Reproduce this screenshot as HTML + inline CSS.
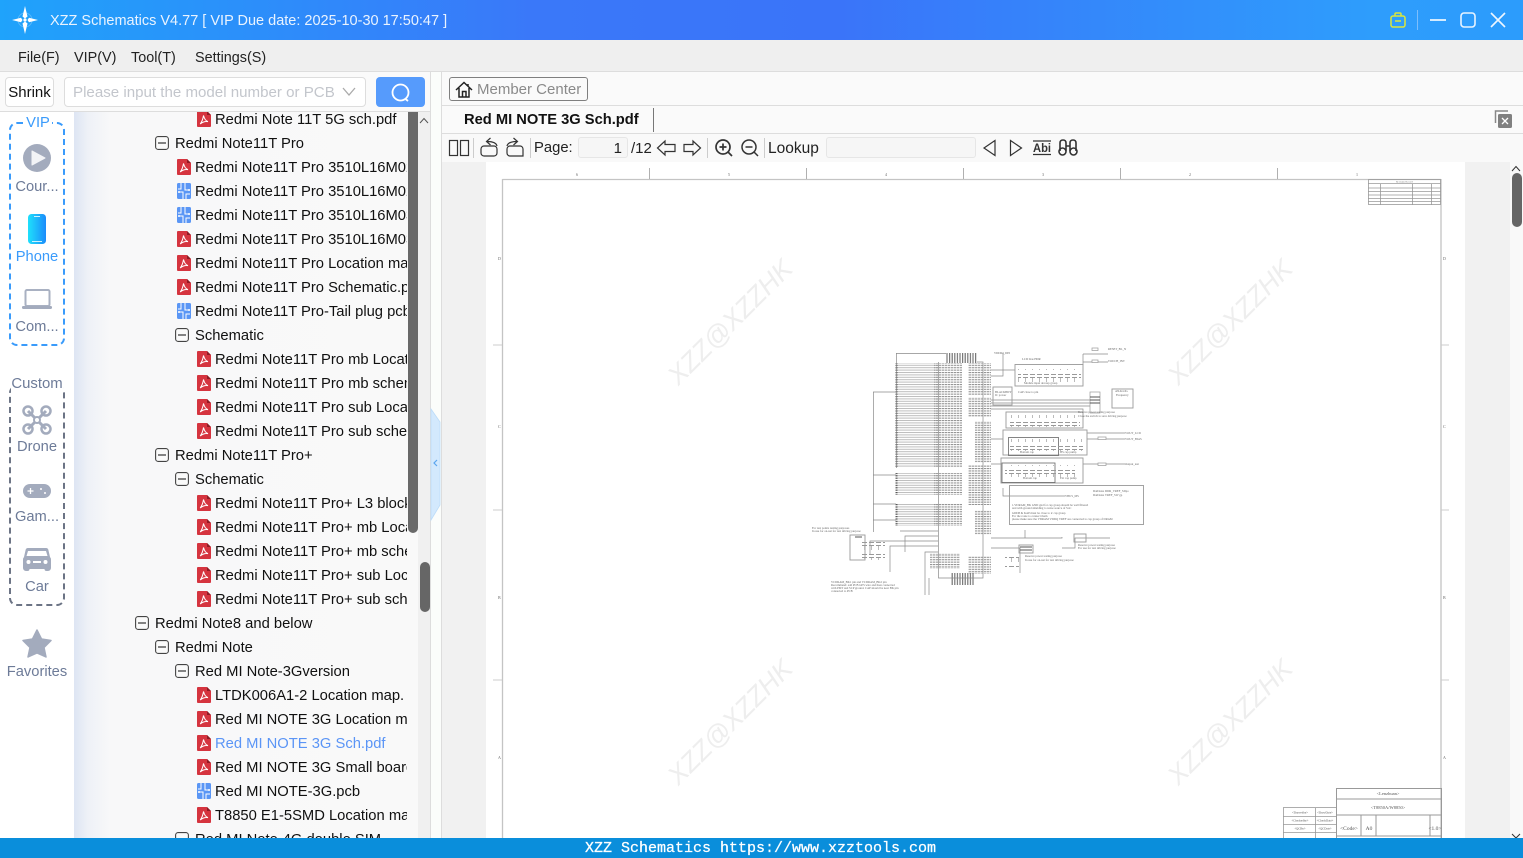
<!DOCTYPE html>
<html><head><meta charset="utf-8"><title>XZZ Schematics</title>
<style>
*{box-sizing:border-box}
html,body{margin:0;padding:0;width:1523px;height:858px;overflow:hidden;background:#fafafa;font-family:"Liberation Sans","Noto Sans CJK SC",sans-serif;font-size:15px;color:#222}
.a{position:absolute;white-space:nowrap}
#title{left:0;top:0;width:1523px;height:40px;background:linear-gradient(90deg,#1fa3fb 0,#3a78f9 35%,#3a74f9 55%,#2e9dfc 90%,#2c9cfc 100%)}
#menu{left:0;top:40px;width:1523px;height:32px;background:#efefef;border-bottom:1px solid #ddd}
.m{top:49px;line-height:18px;font-size:14.400px;color:#222}
#tree{left:74px;top:112px;width:333px;height:726px;overflow:hidden;background:linear-gradient(90deg,#dde5f3 0,#eef1f7 14px,#f8f8f9 36px,#f9f9f9 100%)}
.r{position:absolute;height:24px;line-height:24px;left:0;width:333px;white-space:nowrap;color:#111;font-size:14.760px}
.r svg{position:absolute;top:4px;width:14px;height:16px}
.r span{position:absolute;top:1px}
.lab{position:absolute;left:0;width:74px;text-align:center;font-size:14.700px;line-height:18px;color:#6d7b98}
.wm{position:absolute;white-space:nowrap;width:232px;text-align:center;line-height:36px;font-size:26.500px;font-style:italic;color:#eeeeee;transform:rotate(-45deg)}
</style></head><body>
<svg width="0" height="0" style="position:absolute"><defs>
<symbol id="pdf" viewBox="0 0 14 16"><path d="M1 0H10L14 4V15a1 1 0 0 1-1 1H1a1 1 0 0 1-1-1V1a1 1 0 0 1 1-1Z" fill="#d5343f"/><path d="M10 0L14 4H10Z" fill="#8e1c25"/><path d="M6.5 4.5C7.5 8 8.5 9.6 11 10.6 8 10.2 5.5 11 3.2 13 5 10.600 6 8 6.500 4.500Z" fill="none" stroke="#fff" stroke-width="1"/></symbol>
<symbol id="pcb" viewBox="0 0 14 16"><rect width="14" height="16" rx="1.500" fill="#5a96f5"/><path d="M4 0V6H1M6 16V9H2M8 0V7H13M9 16V11H13" fill="none" stroke="#fff" stroke-width="1"/><circle cx="2" cy="9" r="1" fill="#fff"/><circle cx="12" cy="7" r="1" fill="#fff"/></symbol>
<symbol id="box" viewBox="0 0 14 14"><rect x=".6" y=".6" width="12.800" height="12.800" rx="2.500" fill="#fafafa" stroke="#444" stroke-width="1.100"/><path d="M3 7H11" stroke="#333" stroke-width="1.200"/></symbol>
<pattern id="h1" width="4" height="2.400" patternUnits="userSpaceOnUse"><rect width="4" height="1" fill="#bdbdbd"/></pattern>
<pattern id="h2" width="3" height="2.400" patternUnits="userSpaceOnUse"><rect width="2.400" height="1.100" fill="#949494"/></pattern>
<pattern id="d1" width="2" height="2.400" patternUnits="userSpaceOnUse"><rect width="2" height="1.200" fill="#555"/></pattern>
<pattern id="v1" width="2.600" height="4" patternUnits="userSpaceOnUse"><rect width="1.200" height="4" fill="#777"/></pattern>
<pattern id="c1" width="7" height="12" patternUnits="userSpaceOnUse"><rect x="1" y="2" width="5" height="1" fill="#999"/><rect x="1" y="5" width="5" height="1" fill="#999"/><rect x="3" y="6" width="1" height="4" fill="#bbb"/></pattern>
</defs></svg>

<div id="title" class="a"></div>
<div class="a" style="left:50px;top:12px;line-height:19px;color:#e9f3ff;font-size:14.500px">XZZ Schematics V4.77 [ VIP Due date: 2025-10-30 17:50:47 ]</div>
<div id="menu" class="a"></div>
<div class="a m" style="left:18px">File(F)</div><div class="a m" style="left:74px">VIP(V)</div><div class="a m" style="left:131px">Tool(T)</div><div class="a m" style="left:195px">Settings(S)</div>

<div class="a" style="left:5px;top:77px;width:49px;height:30px;border:1px solid #ddd;border-radius:4px;background:#fff;text-align:center;line-height:30px;font-size:15px;color:#111">Shrink</div>
<div class="a" style="left:64px;top:77px;width:302px;height:30px;border:1px solid #ddd;border-radius:4px;background:#fff;line-height:30px;padding-left:8px;color:#c3c6cc;font-size:15.100px">Please input the model number or PCB</div>
<div class="a" style="left:376px;top:77px;width:49px;height:30px;background:#569bfc;border-radius:4px"></div>
<div class="a" style="left:0;top:111px;width:431px;height:1px;background:#ddd"></div>
<div class="a" style="left:0;top:112px;width:74px;height:726px;background:#fff"></div>

<div id="tree" class="a">
<div class="r" style="top:-5px"><svg style="left:123px"><use href="#pdf"/></svg><span style="left:141px">Redmi Note 11T 5G sch.pdf</span></div>
<div class="r" style="top:19px"><svg style="left:81px;top:4px"><use href="#box"/></svg><span style="left:101px">Redmi Note11T Pro</span></div>
<div class="r" style="top:43px"><svg style="left:103px"><use href="#pdf"/></svg><span style="left:121px">Redmi Note11T Pro 3510L16M02 mb sch.pdf</span></div>
<div class="r" style="top:67px"><svg style="left:103px"><use href="#pcb"/></svg><span style="left:121px">Redmi Note11T Pro 3510L16M02 mb.pcb</span></div>
<div class="r" style="top:91px"><svg style="left:103px"><use href="#pcb"/></svg><span style="left:121px">Redmi Note11T Pro 3510L16M03 mb.pcb</span></div>
<div class="r" style="top:115px"><svg style="left:103px"><use href="#pdf"/></svg><span style="left:121px">Redmi Note11T Pro 3510L16M03 mb sch.pdf</span></div>
<div class="r" style="top:139px"><svg style="left:103px"><use href="#pdf"/></svg><span style="left:121px">Redmi Note11T Pro Location map.pdf</span></div>
<div class="r" style="top:163px"><svg style="left:103px"><use href="#pdf"/></svg><span style="left:121px">Redmi Note11T Pro Schematic.pdf</span></div>
<div class="r" style="top:187px"><svg style="left:103px"><use href="#pcb"/></svg><span style="left:121px">Redmi Note11T Pro-Tail plug pcb.pcb</span></div>
<div class="r" style="top:211px"><svg style="left:101px;top:4px"><use href="#box"/></svg><span style="left:121px">Schematic</span></div>
<div class="r" style="top:235px"><svg style="left:123px"><use href="#pdf"/></svg><span style="left:141px">Redmi Note11T Pro mb Location.pdf</span></div>
<div class="r" style="top:259px"><svg style="left:123px"><use href="#pdf"/></svg><span style="left:141px">Redmi Note11T Pro mb schematic.pdf</span></div>
<div class="r" style="top:283px"><svg style="left:123px"><use href="#pdf"/></svg><span style="left:141px">Redmi Note11T Pro sub Location.pdf</span></div>
<div class="r" style="top:307px"><svg style="left:123px"><use href="#pdf"/></svg><span style="left:141px">Redmi Note11T Pro sub schematic.pdf</span></div>
<div class="r" style="top:331px"><svg style="left:81px;top:4px"><use href="#box"/></svg><span style="left:101px">Redmi Note11T Pro+</span></div>
<div class="r" style="top:355px"><svg style="left:101px;top:4px"><use href="#box"/></svg><span style="left:121px">Schematic</span></div>
<div class="r" style="top:379px"><svg style="left:123px"><use href="#pdf"/></svg><span style="left:141px">Redmi Note11T Pro+ L3 block.pdf</span></div>
<div class="r" style="top:403px"><svg style="left:123px"><use href="#pdf"/></svg><span style="left:141px">Redmi Note11T Pro+ mb Location.pdf</span></div>
<div class="r" style="top:427px"><svg style="left:123px"><use href="#pdf"/></svg><span style="left:141px">Redmi Note11T Pro+ mb schematic.pdf</span></div>
<div class="r" style="top:451px"><svg style="left:123px"><use href="#pdf"/></svg><span style="left:141px">Redmi Note11T Pro+ sub Location.pdf</span></div>
<div class="r" style="top:475px"><svg style="left:123px"><use href="#pdf"/></svg><span style="left:141px">Redmi Note11T Pro+ sub schematic.pdf</span></div>
<div class="r" style="top:499px"><svg style="left:61px;top:4px"><use href="#box"/></svg><span style="left:81px">Redmi Note8 and below</span></div>
<div class="r" style="top:523px"><svg style="left:81px;top:4px"><use href="#box"/></svg><span style="left:101px">Redmi Note</span></div>
<div class="r" style="top:547px"><svg style="left:101px;top:4px"><use href="#box"/></svg><span style="left:121px">Red MI Note-3Gversion</span></div>
<div class="r" style="top:571px"><svg style="left:123px"><use href="#pdf"/></svg><span style="left:141px">LTDK006A1-2 Location map.</span></div>
<div class="r" style="top:595px"><svg style="left:123px"><use href="#pdf"/></svg><span style="left:141px">Red MI NOTE 3G Location map.pdf</span></div>
<div class="r" style="top:619px"><svg style="left:123px"><use href="#pdf"/></svg><span style="left:141px;color:#5b95f6">Red MI NOTE 3G Sch.pdf</span></div>
<div class="r" style="top:643px"><svg style="left:123px"><use href="#pdf"/></svg><span style="left:141px">Red MI NOTE 3G Small board.pdf</span></div>
<div class="r" style="top:667px"><svg style="left:123px"><use href="#pcb"/></svg><span style="left:141px">Red MI NOTE-3G.pcb</span></div>
<div class="r" style="top:691px"><svg style="left:123px"><use href="#pdf"/></svg><span style="left:141px">T8850 E1-5SMD Location map.pdf</span></div>
<div class="r" style="top:715px"><svg style="left:101px;top:4px"><use href="#box"/></svg><span style="left:121px">Red MI Note-4G double SIM</span></div>
</div>
<div class="a" style="left:407px;top:112px;width:11px;height:726px;background:#f9f9f9"></div>
<div class="a" style="left:408px;top:112px;width:10px;height:421px;background:#696969;border-radius:0 0 5px 5px"></div>
<div class="a" style="left:418px;top:112px;width:12px;height:726px;background:#f0f0f0"></div>
<div class="a" style="left:420px;top:562px;width:10px;height:50px;background:#666;border-radius:5px"></div>
<div class="a" style="left:430px;top:72px;width:1px;height:766px;background:#ddd"></div>
<div class="a" style="left:431px;top:72px;width:10px;height:766px;background:#fbfdfb"></div>
<div class="a" style="left:441px;top:72px;width:1px;height:766px;background:#ddd"></div>

<div class="a" style="left:442px;top:72px;width:1081px;height:33px;background:#fafafa"></div>
<div class="a" style="left:442px;top:105px;width:1081px;height:1px;background:#ddd"></div>
<div class="a" style="left:442px;top:133px;width:1081px;height:1px;background:#ddd"></div>
<div class="a" style="left:442px;top:134px;width:1081px;height:28px;background:#f9f9f9"></div>
<div class="a" style="left:449px;top:77px;width:139px;height:24px;border:1px solid #7f7f7f;border-radius:3px"></div>
<div class="a" style="left:477px;top:80px;line-height:19px;font-size:15px;color:#8a8a8a">Member Center</div>
<div class="a" style="left:464px;top:111px;line-height:19px;font-weight:bold;color:#111;font-size:14.700px">Red MI NOTE 3G Sch.pdf</div>
<div class="a" style="left:653px;top:108px;width:1px;height:24px;background:#777"></div>
<div class="a" style="left:534px;top:139px;line-height:19px;color:#222;font-size:14.800px">Page:</div>
<div class="a" style="left:578px;top:137px;width:50px;height:21px;background:#f6f6f6;border:1px solid #e6e6e6;border-radius:3px;text-align:right;padding-right:5px;line-height:21px;color:#222">1</div>
<div class="a" style="left:631px;top:139px;line-height:19px;color:#222">/12</div>
<div class="a" style="left:768px;top:139px;line-height:19px;color:#222;font-size:15.500px">Lookup</div>
<div class="a" style="left:826px;top:137px;width:150px;height:21px;background:#f6f6f6;border:1px solid #e6e6e6;border-radius:3px"></div>

<div class="a" style="left:442px;top:162px;width:1068px;height:676px;background:#f1f1f1"></div>
<div class="a" style="left:486px;top:162px;width:979px;height:676px;background:#fff"></div>
<div class="a" style="left:1510px;top:162px;width:13px;height:676px;background:#f9f9f9"></div>
<div class="a" style="left:1512px;top:173px;width:10px;height:54px;background:#666;border-radius:5px"></div>

<div class="wm" style="left:614px;top:304px">XZZ@XZZHK</div>
<div class="wm" style="left:1114px;top:304px">XZZ@XZZHK</div>
<div class="wm" style="left:614px;top:704px">XZZ@XZZHK</div>
<div class="wm" style="left:1114px;top:704px">XZZ@XZZHK</div>

<!-- sidebar labels -->
<div class="a" style="left:9px;top:122px;width:56px;height:224px;border:2px dashed #3a9bfb;border-radius:8px"></div>
<div class="a" style="left:9px;top:385px;width:56px;height:221px;border:2px dashed #6c7485;border-radius:8px"></div>
<div class="a" style="left:24px;top:114px;width:28px;height:18px;background:#fff;text-align:center;line-height:18px;font-size:14.700px;color:#3a9bfb">VIP</div>
<div class="a" style="left:11px;top:375px;width:52px;height:18px;background:#fff;text-align:center;line-height:18px;font-size:14.900px;color:#6d7b98">Custom</div>
<div class="lab" style="top:178px">Cour...</div>
<div class="lab" style="top:248px;color:#3a9bfb">Phone</div>
<div class="lab" style="top:318px">Com...</div>
<div class="lab" style="top:438px">Drone</div>
<div class="lab" style="top:508px">Gam...</div>
<div class="lab" style="top:578px">Car</div>
<div class="lab" style="top:663px">Favorites</div>

<svg class="a" style="left:0;top:0" width="1523" height="858" viewBox="0 0 1523 858">
<defs><linearGradient id="ph" x1="0" x2="1" y1="0" y2="0"><stop offset="0" stop-color="#1fe0fb"/><stop offset="1" stop-color="#1b8cfb"/></linearGradient>
<clipPath id="pg"><rect x="486" y="162" width="979" height="676"/></clipPath></defs>
<!-- title logo -->
<g fill="#fff"><path d="M25 6L27.500 16.500 25 18.500 22.500 16.500Z"/><path d="M25 34L27.500 23.500 25 21.500 22.500 23.500Z"/><path d="M12 20L21 17.800 22.500 20 21 22.200Z"/><path d="M38 20L29 17.800 27.500 20 29 22.200Z"/><circle cx="25" cy="20" r="1.600"/></g>
<circle cx="25" cy="20" r="7" fill="none" stroke="#fff" stroke-opacity=".25"/>
<!-- window -->
<rect x="1391" y="16" width="14" height="11" rx="2" fill="none" stroke="#dbe63b" stroke-width="1.500"/><path d="M1395 16V14a1 1 0 0 1 1-1h4a1 1 0 0 1 1 1v2M1395 21H1401" fill="none" stroke="#dbe63b" stroke-width="1.500"/>
<path d="M1417.500 10V30" stroke="#7dbefc"/>
<path d="M1430 20H1446" stroke="#fff" stroke-width="1.600"/>
<rect x="1461" y="13" width="14" height="14" rx="3" fill="none" stroke="#e8f3ff" stroke-width="1.600"/>
<path d="M1491 13L1505 27M1505 13L1491 27" stroke="#eef6ff" stroke-width="1.600"/>
<!-- search -->
<path d="M343 88L349 95 355 88" fill="none" stroke="#aaa" stroke-width="1.300"/>
<circle cx="400.500" cy="92.500" r="8" fill="none" stroke="#fff" stroke-width="1.800"/><path d="M405.500 99L408 101" stroke="#fff" stroke-width="1.800"/>
<!-- scroll arrows -->
<path d="M420 123L424 118.500 428 123" fill="none" stroke="#555"/>
<path d="M1512 171L1516 166.500 1520 171" fill="none" stroke="#333"/>
<path d="M1512 834L1516 838 1520 834" fill="none" stroke="#333"/>
<!-- splitter tab -->
<path d="M431 409L440 422V505L431 520Z" fill="#d3e9fd" stroke="#bcdcf9" stroke-width=".8"/>
<path d="M437 460L434 463 437 466" fill="none" stroke="#5aa5ef" stroke-width="1.200"/>
<!-- sidebar icons -->
<circle cx="37" cy="158" r="14" fill="#a3abbd"/><path d="M32 151L45 158 32 165Z" fill="#f2f3f6" stroke="#f2f3f6" stroke-linejoin="round"/>
<rect x="28" y="214" width="18" height="30" rx="3.500" fill="url(#ph)"/><path d="M34 216.500H40M32 241.500H42" stroke="#cdf3ff" stroke-width=".9"/>
<rect x="25.500" y="290" width="24" height="16" rx="1.500" fill="#fff" stroke="#a9b1c2" stroke-width="2"/><rect x="22" y="306" width="30" height="3" rx="1.200" fill="#a3abbd"/>
<g fill="none" stroke="#a3abbd"><path d="M28 411L46 429M46 411L28 429" stroke-width="3"/><circle cx="28" cy="411" r="4.500" stroke-width="2.500"/><circle cx="46" cy="411" r="4.500" stroke-width="2.500"/><circle cx="28" cy="429" r="4.500" stroke-width="2.500"/><circle cx="46" cy="429" r="4.500" stroke-width="2.500"/><circle cx="37" cy="420" r="3" fill="#fff" stroke-width="2"/></g>
<rect x="23" y="484" width="28" height="14" rx="7" fill="#a3abbd"/><path d="M27.500 491H33.500M30.500 488V494" stroke="#fff" stroke-width="1.300"/><circle cx="41" cy="489" r="1" fill="#fff"/><circle cx="45" cy="493" r="1" fill="#fff"/>
<path d="M28 548H46a2.500 2.500 0 0 1 2.400 2L50 557q1 1 1 3V568a3 3 0 0 1-3 3H46.500a2 2 0 0 1-2-2H29.500a2 2 0 0 1-2 2H26a3 3 0 0 1-3-3V560q0-2 1-3L25.600 550a2.500 2.500 0 0 1 2.400-2Z" fill="#a3abbd"/><path d="M28 551H46L47.500 556H26.500Z" fill="#fff"/><circle cx="28.500" cy="562" r="2" fill="#fff"/><circle cx="45.500" cy="562" r="2" fill="#fff"/><path d="M33 562H41" stroke="#fff" stroke-width="2"/>
<path d="M37 630L41.500 639 51 640.500 44 647.500 46 657 37 653 28 657 30 647.500 23 640.500 32.500 639Z" fill="#a3abbd" stroke="#a3abbd" stroke-width="1.500" stroke-linejoin="round"/>
<!-- member / tab -->
<path d="M456 90L464 82.500 472 90M459 88V97H469V88M462.500 97V91.500H466V97M468 84V86" fill="none" stroke="#222" stroke-width="1.500"/>
<path d="M1495.500 123V111H1508" fill="none" stroke="#888" stroke-width="1.500"/><rect x="1498" y="114" width="14" height="14" rx="1.500" fill="#808080"/><path d="M1502 118L1508 124M1508 118L1502 124" stroke="#fff" stroke-width="1.300"/>
<!-- toolbar -->
<g fill="none" stroke="#333" stroke-width="1.200">
<rect x="449.500" y="140.500" width="8" height="15"/><rect x="460.500" y="140.500" width="8" height="15"/>
<path d="M481 149a3 3 0 0 1 3-3H494a3 3 0 0 1 3 3V153a3 3 0 0 1-3 3H484a3 3 0 0 1-3-3Z"/><path d="M497 146Q496 141.500 487 141.500M490.500 138L486.500 141.500 490.500 145"/>
<path d="M507 149a3 3 0 0 1 3-3H520a3 3 0 0 1 3 3V156H510a3 3 0 0 1-3-3Z"/><path d="M507 146Q508 141.500 517 141.500M513.500 138L517.500 141.500 513.500 145"/>
<path d="M657.500 148L665 141V144.500H675V151.500H665V155Z"/><path d="M700.500 148L693 141V144.500H684V151.500H693V155Z"/>
<circle cx="723" cy="147" r="7" stroke-width="1.700"/><path d="M728 152L732 156" stroke-width="1.700"/><path d="M719.500 147H726.500M723 143.500V150.500" stroke-width="1.700"/>
<circle cx="749" cy="147" r="7" stroke-width="1.500"/><path d="M754 152L758 156M745.500 147H752.500" stroke-width="1.500"/>
<path d="M995 140.500L984 148 995 155.500Z"/><path d="M1010.500 140.500L1021.500 148 1010.500 155.500Z"/>
<path d="M1033 141H1051M1033 154.500H1051"/>
<path d="M1060 151V143Q1060 140 1063 140T1066 143V151M1070 151V143Q1070 140 1073 140T1076 143V151M1066 146H1070" stroke-width="1.600"/><circle cx="1062.500" cy="151.500" r="3.500" stroke-width="1.600"/><circle cx="1073.500" cy="151.500" r="3.500" stroke-width="1.600"/>
</g>
<text x="1033" y="152" font-size="12" font-weight="bold" fill="#333" font-family="Liberation Sans" textLength="18" lengthAdjust="spacingAndGlyphs">Abi</text>
<g stroke="#ccc"><path d="M473.500 138V158M530.500 138V158M707.500 138V158M764.500 138V158"/></g>

<!-- page drawing -->
<g clip-path="url(#pg)">
<path d="M502.500 179.500H1441M502.500 179V838M1441 179V838" fill="none" stroke="#c4c4c4" stroke-width="1.300"/>
<path d="M649.500 168V179M806.500 168V179M963.500 168V179M1120.500 168V179M1277.500 168V179" stroke="#b0b0b0"/>
<path d="M502 345H493M502 510H493M502 680H493M1441 345H1449M1441 510H1449M1441 680H1449" stroke="#ccc"/>
<g font-family="Liberation Serif" font-size="4" fill="#666">
<text x="576" y="176">6</text><text x="728" y="176">5</text><text x="885" y="176">4</text><text x="1042" y="176">3</text><text x="1189" y="176">2</text><text x="1356" y="176">1</text>
<text x="498" y="260">D</text><text x="498" y="428">C</text><text x="498" y="599">B</text><text x="498" y="759">A</text>
<text x="1443" y="260">D</text><text x="1443" y="428">C</text><text x="1443" y="599">B</text><text x="1443" y="759">A</text>
</g>
<!-- top right table -->
<g fill="none" stroke="#999" stroke-width=".8"><rect x="1368.500" y="179.500" width="72" height="25"/><path d="M1368 183.500H1441M1368 188H1441M1368 191.500H1441M1368 195H1441M1368 198.500H1441M1368 201.500H1441M1380.500 184V205M1412.500 184V205M1431.500 184V205"/></g>
<text x="1396" y="182.500" font-size="2.500" font-family="Liberation Serif" fill="#666">Revision Record</text>
<!-- bottom right title block -->
<g fill="none" stroke="#999"><rect x="1336.500" y="788.500" width="105" height="60"/><path d="M1336 799H1441M1336 815H1441M1336 836H1441M1361 815V836M1376 815V836M1430 815V836"/><rect x="1283.500" y="807.500" width="53" height="40" stroke-width=".8"/><path d="M1283 816.500H1336M1283 824.500H1336M1283 832.500H1336M1315.500 808V838" stroke-width=".8"/></g>
<g font-family="Liberation Serif" fill="#555" text-anchor="middle"><text x="1388" y="795" font-size="4.500">&lt;Lenzhuan&gt;</text><text x="1388" y="809" font-size="4.500">&lt;T8850A/W8850&gt;</text><text x="1349" y="830" font-size="5.500">&lt;Code&gt;</text><text x="1369" y="830" font-size="5.500">A0</text><text x="1435" y="830" font-size="5.500">&lt;1.0&gt;</text><text x="1300" y="813.500" font-size="3">&lt;Drawedby&gt;</text><text x="1325" y="813.500" font-size="3">&lt;DrawDate&gt;</text><text x="1300" y="821.500" font-size="3">&lt;Checkedby&gt;</text><text x="1325" y="821.500" font-size="3">&lt;CheckDate&gt;</text><text x="1300" y="829.500" font-size="3">&lt;QCBy&gt;</text><text x="1325" y="829.500" font-size="3">&lt;QCDate&gt;</text></g>
<!-- schematic -->
<rect x="896" y="363" width="42" height="105" fill="url(#h1)"/><rect x="896" y="473" width="42" height="22" fill="url(#h1)"/><rect x="896" y="503" width="42" height="23" fill="url(#h1)"/>
<rect x="895.500" y="363" width="2" height="105" fill="url(#d1)"/><rect x="895.500" y="473" width="2" height="22" fill="url(#d1)"/><rect x="895.500" y="503" width="2" height="23" fill="url(#d1)"/>
<rect x="934" y="363" width="28" height="105" fill="url(#h2)"/><rect x="934" y="473" width="28" height="22" fill="url(#h2)"/><rect x="934" y="503" width="28" height="23" fill="url(#h2)"/>
<rect x="968" y="363" width="23" height="32" fill="url(#h2)"/><rect x="968" y="397" width="23" height="20" fill="url(#h2)"/><rect x="975" y="421" width="16" height="42" fill="url(#h2)"/><rect x="968" y="465" width="23" height="40" fill="url(#h2)"/><rect x="975" y="510" width="16" height="25" fill="url(#h2)"/><rect x="968" y="556" width="23" height="18" fill="url(#h2)"/><rect x="930" y="553" width="30" height="16" fill="url(#h2)"/><rect x="946" y="353" width="31" height="10" fill="url(#v1)"/><rect x="951" y="573" width="24" height="12" fill="url(#v1)"/>
<g fill="none" stroke="#8a8a8a" stroke-width=".7">
<path d="M896 353.500H946M896.500 353V468M977 362H983V578H951M938.500 362V578H951M873.500 392V532M873 392H896M873 475H896M873 504H896M873 520H896"/>
<path d="M938 531H900M938 536H905V552M938 541H870V555M938 546H890V572M938 552H925V595M929 578V595"/>
<path d="M991 370H1015M991 376H1003V353M1083 354V365M1083 354H1108M1083 362H1108M991 400H1098M991 403H1098M991 406H1098M991 409H1012M1012 409H1083V413"/>
<path d="M991 439H1003M1087 433H1125M1087 439H1125M991 464H1001M1083 464H1125M1003 488V496H1065M991 538H1025V530M1025 538H1062V537M991 548H1020V573M1062 548H1075V538H1105M1110 538H1085"/>
</g>
<g fill="#fff" stroke="#999" stroke-width=".7"><rect x="1092" y="348" width="6" height="2.500"/><rect x="1092" y="360" width="6" height="2.500"/><rect x="1090" y="392" width="10" height="21"/><rect x="1098" y="437" width="8" height="2.500"/><rect x="1098" y="463" width="8" height="2.500"/></g>
<g fill="none" stroke="#999" stroke-width=".9"><rect x="1015" y="364.500" width="68" height="21.500"/><rect x="993" y="387" width="19" height="18"/><rect x="1112" y="389" width="21" height="19"/><rect x="1006" y="412" width="77" height="16"/><rect x="1003" y="430" width="84" height="25"/><rect x="1001" y="458" width="82" height="25"/><rect x="1009.500" y="485.500" width="134" height="39"/><rect x="850" y="535" width="15" height="25"/><rect x="1019" y="545" width="14" height="8"/><rect x="1074" y="534" width="12" height="8"/></g>
<g fill="none" stroke="#666" stroke-width=".8"><rect x="1008.500" y="437.500" width="50" height="18"/><rect x="1002" y="463" width="53" height="19.500"/></g>
<rect x="1018" y="369" width="63" height="13" fill="url(#c1)"/><rect x="1010" y="415" width="70" height="12" fill="url(#c1)"/><rect x="1010" y="439" width="73" height="12" fill="url(#c1)"/><rect x="1005" y="465" width="70" height="12" fill="url(#c1)"/>
<rect x="860" y="540" width="25" height="20" fill="url(#c1)"/><rect x="1005" y="556" width="14" height="12" fill="url(#c1)"/>
<path d="M1090 397H1100M1090 400H1100M1090 403H1100M855 537H862M1020 547H1032M1020 550H1032" stroke="#555"/>
<g font-family="Liberation Serif" font-size="3" fill="#666">
<text x="1022" y="360">LCD bias HDR</text><text x="1024" y="384">Module input decoup group</text><text x="1018" y="393">CAP close to pin</text><text x="995" y="393">BLACKBDY</text><text x="995" y="396">IC power</text><text x="1115" y="392">ANALOG</text><text x="1116" y="396">Frequency</text><text x="1078" y="413">Reserve power testing purpose</text><text x="1078" y="417">Close the switch to save driving purpose</text><text x="1020" y="453">Bottom cap</text><text x="1060" y="453">HS cap pump</text><text x="1023" y="479">Bottom cap</text><text x="1060" y="479">Ext cap pump</text>
<text x="1093" y="492">DatDatas DDR_VREF_SDpo</text><text x="1093" y="496">DatDatas VREF_SW gp</text><text x="1012" y="506">1.VDRAM_BK GND gnd for cap group should be well filtered</text><text x="1012" y="509">and with ground shielding to noise source of SoC</text><text x="1012" y="514">GDDP &amp; KAP must be close to ic cap group</text><text x="1012" y="517">For the route to connect them</text><text x="1012" y="520">please make sure the VDRAM VDDQ VREF are connected to cap group of DRAM</text>
<text x="812" y="529">For test points testing purposes</text><text x="812" y="532">In use for on-net for test driving purpose</text><text x="831" y="583">VCDRAM_BK1 pin and VCDRAM_BK2 pin</text><text x="831" y="586">Recommend: add PCB GPS wire and then connected</text><text x="831" y="589">with PMT and SCP ground. CAP should be near BK pin</text><text x="831" y="592">connected to PCB</text>
<text x="1025" y="557">Reserve power testing purpose</text><text x="1025" y="561">In use for on-net for test driving purpose</text><text x="1078" y="546">Reserve power testing purpose</text><text x="1078" y="549">For use for test driving purpose</text><text x="1108" y="350">RESET_BL_N</text><text x="1108" y="362">TOUCH_INT</text><text x="1125" y="434">VOUT_LCD</text><text x="1125" y="440">VOUT_BIAS</text><text x="1125" y="465">Output_test</text><text x="994" y="354">VDDIO_DPI</text><text x="1065" y="497">VBUS_MS</text>
</g>
</g>
</svg>

<div class="a" style="left:0;top:838px;width:1523px;height:20px;background:#0a8edb"></div>
<div class="a" style="left:585px;top:840px;line-height:18px;font-family:'Liberation Mono',monospace;font-size:15px;color:#fff;-webkit-text-stroke:.25px #fff">XZZ Schematics https://www.xzztools.com</div>
</body></html>
